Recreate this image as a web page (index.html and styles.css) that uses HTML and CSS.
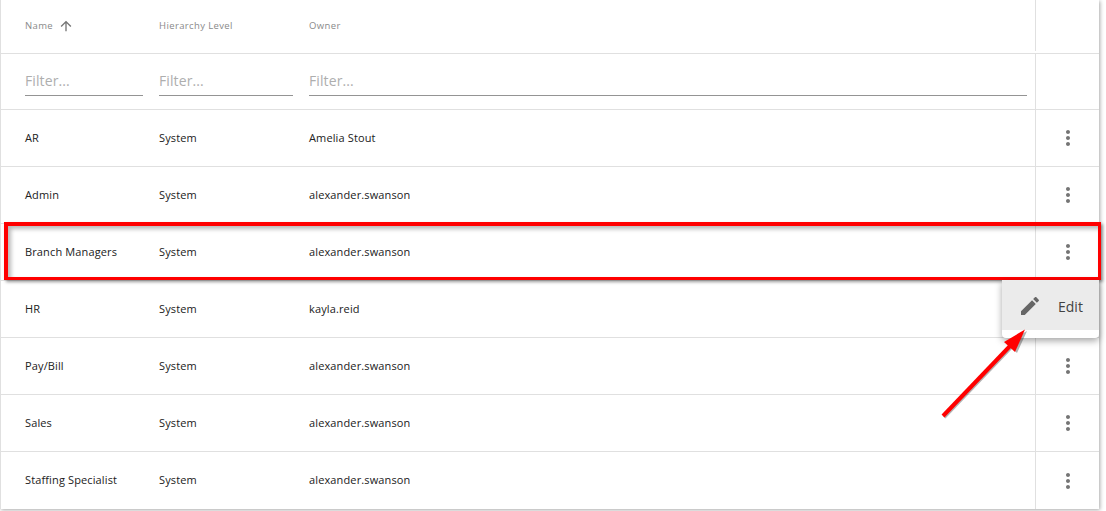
FILE: index.html
```html
<!DOCTYPE html>
<html lang="en">
<head>
<meta charset="utf-8">
<title>Roles</title>
<link rel="stylesheet" href="styles.css">
</head>
<body>
<div class="card">
  <div class="row head">
    <div class="cell"><span>Name</span><svg class="sort" viewBox="0 0 24 24" width="16" height="16"><path d="M4 12l1.41 1.41L11 7.83V20h2V7.83l5.58 5.59L20 12l-8-8-8 8z"/></svg></div>
    <div class="cell">Hierarchy Level</div>
    <div class="cell">Owner</div>
    <div class="cell action"></div>
  </div>
  <div class="row filters">
    <div class="cell"><div class="filter">Filter...</div></div>
    <div class="cell"><div class="filter">Filter...</div></div>
    <div class="cell"><div class="filter">Filter...</div></div>
    <div class="cell action"></div>
  </div>
  <div class="row body"><div class="cell">AR</div><div class="cell">System</div><div class="cell">Amelia Stout</div><div class="cell action"><svg class="more" viewBox="0 0 24 24" width="24" height="24"><path d="M12 8c1.1 0 2-.9 2-2s-.9-2-2-2-2 .9-2 2 .9 2 2 2zm0 2c-1.1 0-2 .9-2 2s.9 2 2 2 2-.9 2-2-.9-2-2-2zm0 6c-1.1 0-2 .9-2 2s.9 2 2 2 2-.9 2-2-.9-2-2-2z"/></svg></div></div>
  <div class="row body"><div class="cell">Admin</div><div class="cell">System</div><div class="cell">alexander.swanson</div><div class="cell action"><svg class="more" viewBox="0 0 24 24" width="24" height="24"><path d="M12 8c1.1 0 2-.9 2-2s-.9-2-2-2-2 .9-2 2 .9 2 2 2zm0 2c-1.1 0-2 .9-2 2s.9 2 2 2 2-.9 2-2-.9-2-2-2zm0 6c-1.1 0-2 .9-2 2s.9 2 2 2 2-.9 2-2-.9-2-2-2z"/></svg></div></div>
  <div class="row body"><div class="cell">Branch Managers</div><div class="cell">System</div><div class="cell">alexander.swanson</div><div class="cell action"><svg class="more" viewBox="0 0 24 24" width="24" height="24"><path d="M12 8c1.1 0 2-.9 2-2s-.9-2-2-2-2 .9-2 2 .9 2 2 2zm0 2c-1.1 0-2 .9-2 2s.9 2 2 2 2-.9 2-2-.9-2-2-2zm0 6c-1.1 0-2 .9-2 2s.9 2 2 2 2-.9 2-2-.9-2-2-2z"/></svg></div></div>
  <div class="row body"><div class="cell">HR</div><div class="cell">System</div><div class="cell">kayla.reid</div><div class="cell action"><svg class="more" viewBox="0 0 24 24" width="24" height="24"><path d="M12 8c1.1 0 2-.9 2-2s-.9-2-2-2-2 .9-2 2 .9 2 2 2zm0 2c-1.1 0-2 .9-2 2s.9 2 2 2 2-.9 2-2-.9-2-2-2zm0 6c-1.1 0-2 .9-2 2s.9 2 2 2 2-.9 2-2-.9-2-2-2z"/></svg></div></div>
  <div class="row body"><div class="cell">Pay/Bill</div><div class="cell">System</div><div class="cell">alexander.swanson</div><div class="cell action"><svg class="more" viewBox="0 0 24 24" width="24" height="24"><path d="M12 8c1.1 0 2-.9 2-2s-.9-2-2-2-2 .9-2 2 .9 2 2 2zm0 2c-1.1 0-2 .9-2 2s.9 2 2 2 2-.9 2-2-.9-2-2-2zm0 6c-1.1 0-2 .9-2 2s.9 2 2 2 2-.9 2-2-.9-2-2-2z"/></svg></div></div>
  <div class="row body"><div class="cell">Sales</div><div class="cell">System</div><div class="cell">alexander.swanson</div><div class="cell action"><svg class="more" viewBox="0 0 24 24" width="24" height="24"><path d="M12 8c1.1 0 2-.9 2-2s-.9-2-2-2-2 .9-2 2 .9 2 2 2zm0 2c-1.1 0-2 .9-2 2s.9 2 2 2 2-.9 2-2-.9-2-2-2zm0 6c-1.1 0-2 .9-2 2s.9 2 2 2 2-.9 2-2-.9-2-2-2z"/></svg></div></div>
  <div class="row body last"><div class="cell">Staffing Specialist</div><div class="cell">System</div><div class="cell">alexander.swanson</div><div class="cell action"><svg class="more" viewBox="0 0 24 24" width="24" height="24"><path d="M12 8c1.1 0 2-.9 2-2s-.9-2-2-2-2 .9-2 2 .9 2 2 2zm0 2c-1.1 0-2 .9-2 2s.9 2 2 2 2-.9 2-2-.9-2-2-2zm0 6c-1.1 0-2 .9-2 2s.9 2 2 2 2-.9 2-2-.9-2-2-2z"/></svg></div></div>
</div>

<div class="highlight"></div>

<div class="menu">
  <div class="menu-item">
    <svg class="pencil" viewBox="0 0 24 24" width="24" height="24"><path d="M3 17.25V21h3.75L17.81 9.94l-3.75-3.75L3 17.25zM20.71 7.04c.39-.39.39-1.02 0-1.41l-2.34-2.34c-.39-.39-1.02-.39-1.41 0l-1.83 1.83 3.75 3.75 1.83-1.83z"/></svg>
    <span>Edit</span>
  </div>
</div>

<svg class="arrow" viewBox="0 0 1106 511" width="1106" height="511">
  <g class="arrow-shadow">
    <line x1="944" y1="417" x2="1011" y2="347"/>
    <polygon points="1027,331 1006,343 1017,353"/>
  </g>
  <g class="arrow-main">
    <line x1="943" y1="416" x2="1010" y2="346"/>
    <polygon points="1025,329.5 1004,342 1015,352"/>
  </g>
</svg>
</body>
</html>
```
FILE: styles.css
```css
* { box-sizing: border-box; }
html, body { margin: 0; padding: 0; }
body {
  width: 1106px;
  height: 511px;
  overflow: hidden;
  background: #fff;
  font-family: "Open Sans", sans-serif;
  position: relative;
}
.card {
  width: 1099px;
  background: #fff;
  border-left: 1px solid #e0e0e0;
  box-shadow: 1px 1px 4px rgba(0,0,0,.35);
}
.row {
  display: grid;
  grid-template-columns: 158px 150px 1fr 64px;
  border-bottom: 1px solid #e0e0e0;
}
.cell {
  display: flex;
  align-items: center;
  padding-left: 24px;
  min-width: 0;
}
.cell:nth-child(n+2) { padding-left: 0; }
.cell.action {
  border-left: 1px solid #e0e0e0;
  justify-content: center;
  padding: 0;
}
.head {
  height: 54px;
  padding-bottom: 2px;
  font-size: 9.5px;
  letter-spacing: .38px;
  color: #8a8a8a;
}
.sort { fill: #757575; margin-left: 5px; }
.filters { height: 56px; }
.filters .cell { align-items: flex-start; padding-top: 12px; }
.filter {
  width: 100%;
  height: 30px;
  padding-top: 5px;
  border-bottom: 1px solid #949494;
  font-size: 14px;
  letter-spacing: .1px;
  line-height: 20px;
  color: #aeaeae;
}
.filters .cell:nth-child(1) { padding-right: 16px; }
.filters .cell:nth-child(2) { padding-right: 16px; }
.filters .cell:nth-child(3) { padding-right: 8px; }
.body {
  height: 57px;
  font-size: 11px;
  letter-spacing: .13px;
  color: #212121;
}
.body .cell:not(.action) { padding-bottom: 2px; }
.last { border-bottom: 0; }
.more { fill: #757575; display: block; }
.highlight {
  position: absolute;
  left: 4px;
  top: 222px;
  width: 1097px;
  height: 58px;
  border-style: solid;
  border-color: #f00;
  border-width: 4px 3px 3px 4px;
  box-shadow: 2px 2px 3px rgba(0,0,0,.4), inset 3px 3px 4px rgba(0,0,0,.28);
}
.menu {
  position: absolute;
  left: 1002px;
  top: 280px;
  width: 97px;
  height: 58px;
  padding-bottom: 8px;
  background: #fff;
  border-radius: 0 0 4px 4px;
  box-shadow: 0 3px 7px rgba(0,0,0,.35);
}
.menu-item {
  height: 50px;
  padding-top: 2px;
  background: #ebebeb;
  display: flex;
  align-items: center;
  padding-left: 16px;
  font-size: 14px;
  color: #424242;
}
.pencil { fill: #666; margin-right: 16px; flex: none; }
.arrow { position: absolute; left: 0; top: 0; pointer-events: none; }
.arrow-main line { stroke: #f00; stroke-width: 4; }
.arrow-main polygon { fill: #f00; }
.arrow-shadow line { stroke: rgba(0,0,0,.3); stroke-width: 4; }
.arrow-shadow polygon { fill: rgba(0,0,0,.3); }
```
